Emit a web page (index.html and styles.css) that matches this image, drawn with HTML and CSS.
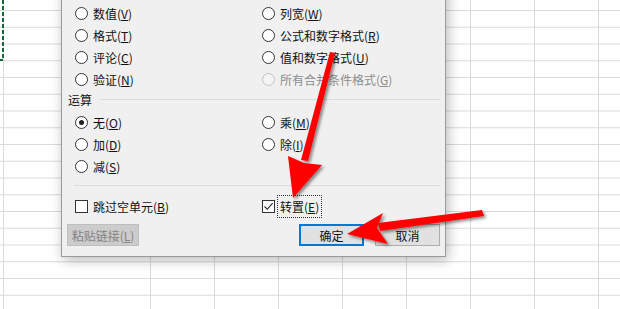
FILE: index.html
```html
<!DOCTYPE html>
<html lang="zh-CN">
<head>
    <meta charset="UTF-8">
    <title>选择性粘贴</title>
    <link rel="stylesheet" href="styles.css">
</head>
<body>
<div class="sheet">
    <div class="col col-edge"></div>
    <div class="col col-a"></div>
    <div class="col"></div>
    <div class="col"></div>
    <div class="col"></div>
    <div class="col wide"></div>
    <div class="col wide"></div>
    <div class="col wide"></div>
    <div class="col wide"></div>
    <div class="col last"></div>

    <svg class="marquee" width="6" height="62">
        <path d="M3 0 V60 H0" fill="none" stroke="#17663a" stroke-width="2" stroke-dasharray="4 2"/>
    </svg>

    <div class="dialog">
        <div class="grid">
            <label class="opt"><span class="radio"></span>数值(<u>V</u>)</label>
            <label class="opt"><span class="radio"></span>列宽(<u>W</u>)</label>
            <label class="opt"><span class="radio"></span>格式(<u>T</u>)</label>
            <label class="opt"><span class="radio"></span>公式和数字格式(<u>R</u>)</label>
            <label class="opt"><span class="radio"></span>评论(<u>C</u>)</label>
            <label class="opt"><span class="radio"></span>值和数字格式(<u>U</u>)</label>
            <label class="opt"><span class="radio"></span>验证(<u>N</u>)</label>
            <label class="opt disabled"><span class="radio"></span>所有合并条件格式(<u>G</u>)</label>
        </div>

        <div class="group-title"><span>运算</span><i></i></div>

        <div class="grid">
            <label class="opt"><span class="radio on"></span>无(<u>O</u>)</label>
            <label class="opt"><span class="radio"></span>乘(<u>M</u>)</label>
            <label class="opt"><span class="radio"></span>加(<u>D</u>)</label>
            <label class="opt"><span class="radio"></span>除(<u>I</u>)</label>
            <label class="opt"><span class="radio"></span>减(<u>S</u>)</label>
        </div>

        <div class="sep"></div>

        <div class="grid">
            <label class="opt"><span class="check"></span>跳过空单元(<u>B</u>)</label>
            <label class="opt"><span class="check on">
                <svg width="11" height="11" viewBox="0 0 11 11"><path d="M1.5 5.5 L4.3 8.3 L9.6 2.2" fill="none" stroke="#222" stroke-width="1.1"/></svg>
            </span><span class="focus">转置(<u>E</u>)</span></label>
        </div>

        <div class="buttons">
            <button type="button" class="btn" disabled>粘贴链接(<u>L</u>)</button>
            <button type="button" class="btn default">确定</button>
            <button type="button" class="btn">取消</button>
        </div>
    </div>

    <svg class="arrows" width="620" height="309" viewBox="0 0 620 309">
        <defs>
            <filter id="sh" x="-20%" y="-20%" width="140%" height="140%">
                <feDropShadow dx="2" dy="2" stdDeviation="1.6" flood-color="#000" flood-opacity="0.45"/>
            </filter>
        </defs>
        <g fill="#ff0606" filter="url(#sh)">
            <polygon points="330,52 335,53 308,161 301,160"/>
            <polygon points="293,198 288,156 304,163 322,165"/>
            <polygon points="482,210 484,216 380,231 378,223"/>
            <polygon points="347,234 383,213 377,228 388,244"/>
        </g>
    </svg>
</div>
</body>
</html>
```

FILE: styles.css
```css
* {
    box-sizing: border-box;
}

body {
    margin: 0;
    width: 620px;
    height: 309px;
    overflow: hidden;
    font-family: "Noto Sans CJK SC", "Microsoft YaHei", sans-serif;
    font-size: 12px;
    color: #111;
}

.sheet {
    position: relative;
    display: flex;
    height: 309px;
    background-color: #fff;
    background-image: linear-gradient(to bottom, #dadada 1px, transparent 1px);
    background-size: 100% 16.75px;
    background-position: 0 10px;
}

.col {
    width: 64px;
    flex: none;
    border-right: 1px solid #dadada;
}

.col-edge {
    width: 4px;
}

.col-a {
    width: 147px;
}

.wide {
    width: 64px;
}

.last {
    flex: 1;
    border-right: none;
}

.marquee {
    position: absolute;
    left: 0;
    top: 0;
}

.dialog {
    position: absolute;
    left: 61px;
    top: -22px;
    width: 385px;
    padding: 23px 5px 10px 5px;
    background: #f0f0f0;
    border: 1px solid #9a9a9a;
    box-shadow: 2px 3px 12px rgba(0, 0, 0, 0.28);
}

.grid {
    display: grid;
    grid-template-columns: 187px 1fr;
    padding-left: 8px;
}

.opt {
    display: flex;
    align-items: center;
    height: 22px;
    white-space: nowrap;
}

.opt u {
    text-underline-offset: 1px;
}

.radio {
    width: 13px;
    height: 13px;
    margin-right: 5px;
    border: 1px solid #333;
    border-radius: 50%;
    background: #fff;
    flex: none;
    display: flex;
    align-items: center;
    justify-content: center;
}

.radio.on::after {
    content: "";
    width: 5px;
    height: 5px;
    border-radius: 50%;
    background: #222;
}

.disabled {
    color: #8d8d8d;
}

.disabled .radio {
    border-color: #c2c2c2;
    background: #f4f4f4;
}

.group-title {
    display: flex;
    align-items: center;
    height: 18px;
    margin-bottom: 3px;
}

.group-title span {
    padding-left: 1px;
    margin-right: 8px;
}

.group-title i {
    flex: 1;
    height: 1px;
    background: #dcdcdc;
}

.sep {
    height: 1px;
    margin: 8px 0 9px 7px;
    background: #dcdcdc;
}

.check {
    width: 13px;
    height: 13px;
    margin-right: 5px;
    border: 1px solid #333;
    background: #fff;
    flex: none;
    display: flex;
    align-items: center;
    justify-content: center;
}

.focus {
    padding: 2px 2px;
    margin-left: -2px;
    outline: 1px dotted #333;
}

.buttons {
    display: flex;
    gap: 11px;
    margin-top: 7px;
}

.btn {
    height: 22px;
    width: 65px;
    padding: 0;
    font-family: inherit;
    font-size: 12px;
    color: #111;
    background: #e1e1e1;
    border: 1px solid #adadad;
}

.btn:disabled {
    width: 72px;
    margin-right: auto;
    color: #838383;
    background: #cccccc;
    border-color: #bfbfbf;
}

.btn.default {
    border: 1px solid #0078d7;
    box-shadow: inset 0 0 0 1px #0078d7;
}

.arrows {
    position: absolute;
    left: 0;
    top: 0;
    pointer-events: none;
}
```
